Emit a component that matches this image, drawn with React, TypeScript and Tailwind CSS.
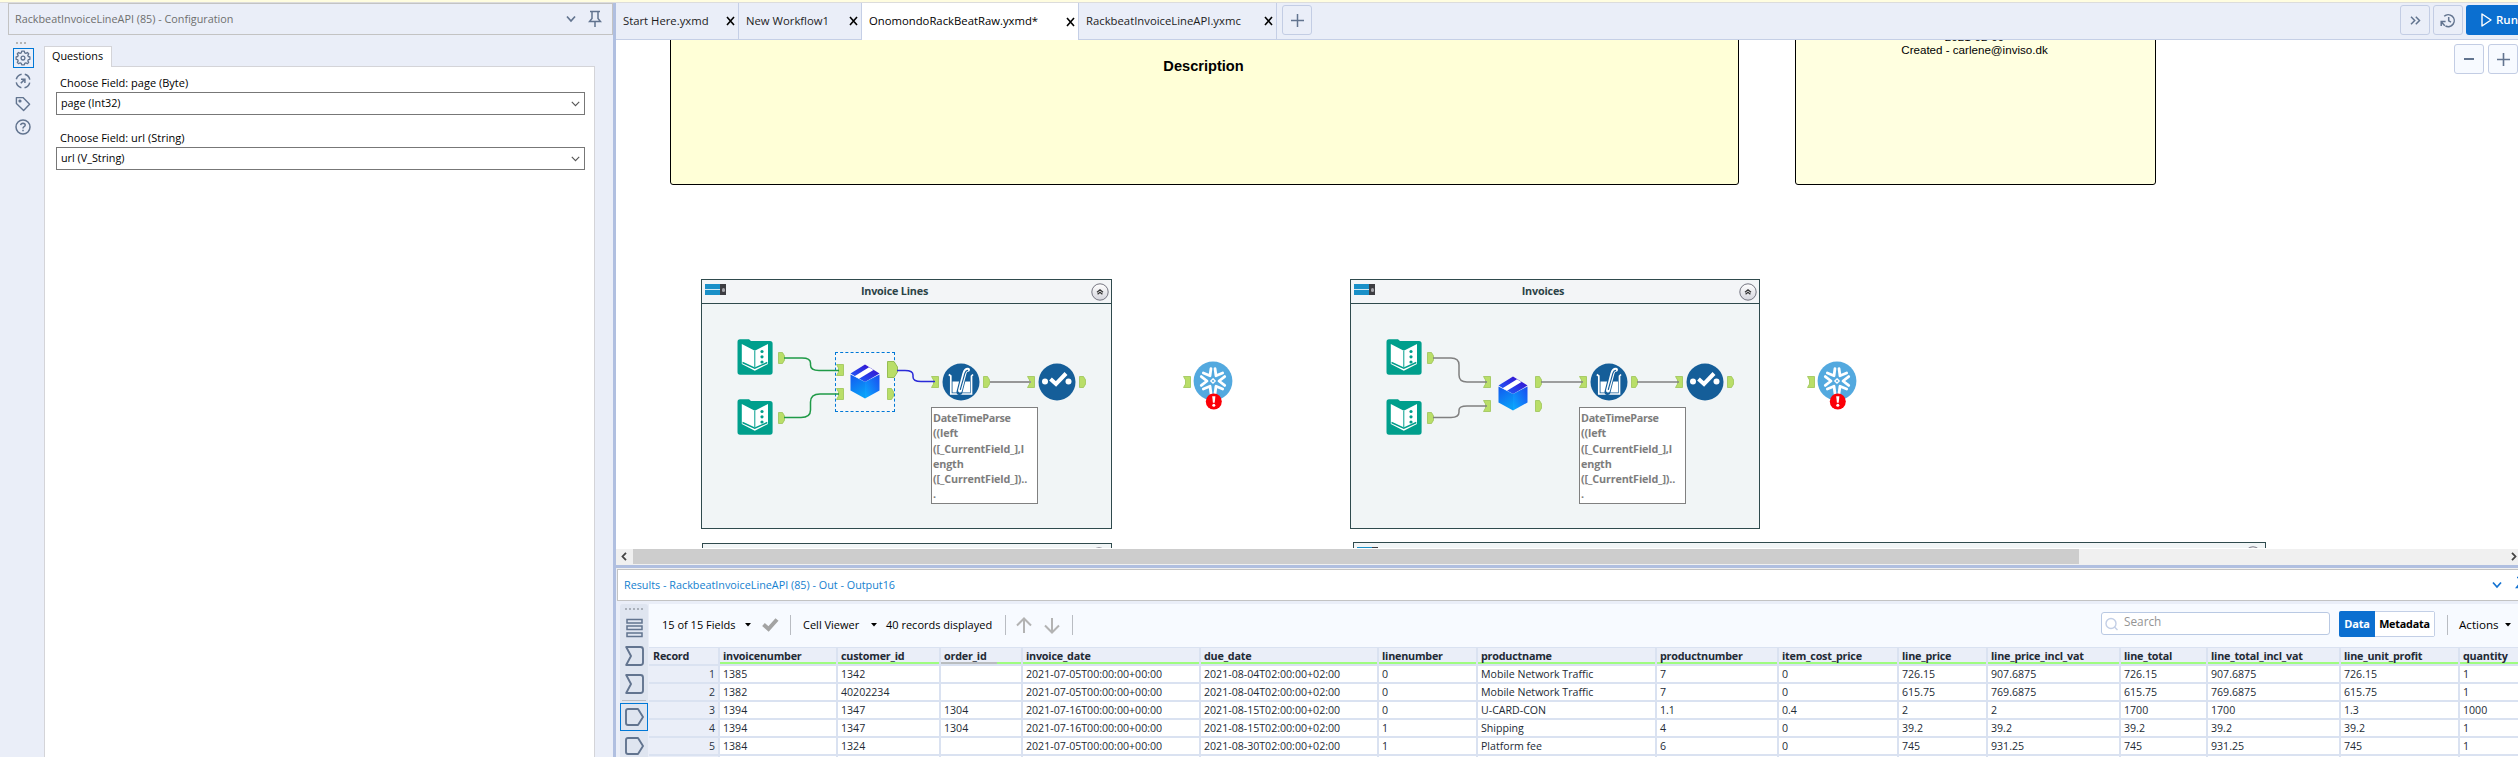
import { ReactNode } from "react";

const SLATE = "#62748f";

/* ---------- small shared icons ---------- */

function Pin({ color }: { color: string }) {
  return (
    <svg width="14" height="18" viewBox="0 0 14 18" fill="none" stroke={color} strokeWidth="1.5">
      <path d="M2 1.5H12M4 1.5V8.5L1.5 11.5H12.5L10 8.5V1.5M7 11.5V17" />
    </svg>
  );
}

function Chevron({ color, w = 10 }: { color: string; w?: number }) {
  return (
    <svg width={w} height="8" viewBox="0 0 10 8" fill="none" stroke={color} strokeWidth="1.7">
      <path d="M1 1.5L5 6L9 1.5" />
    </svg>
  );
}

function Caret() {
  return (
    <svg width="6" height="4" viewBox="0 0 6 4">
      <path d="M0 0H6L3 3.6Z" fill="#000" />
    </svg>
  );
}

function CloseX() {
  return (
    <svg width="9" height="10" viewBox="0 0 9 10" stroke="#000" strokeWidth="1.6">
      <path d="M1 1L8 9M8 1L1 9" />
    </svg>
  );
}

/* ---------- configuration panel ---------- */

function GearIcon() {
  return (
    <svg width="16" height="16" viewBox="0 0 16 16" fill="none" stroke={SLATE} strokeWidth="1.3" strokeLinejoin="round">
      <path d="M6.7 1.2h2.6l.4 1.7 1.2.5 1.5-.9 1.3 1.3-.9 1.5.5 1.2 1.6.4v2.4l-1.6.4-.5 1.2.9 1.5-1.3 1.3-1.5-.9-1.2.5-.4 1.6H6.700l-.4-1.6-1.2-.5-1.5.9-1.3-1.3.9-1.5-.5-1.2-1.6-.4V6.900l1.6-.4.5-1.2-.9-1.5 1.3-1.3 1.5.9 1.2-.5z" />
      <circle cx="8" cy="8.1" r="1.9" />
    </svg>
  );
}

function RunIcon() {
  return (
    <svg width="16" height="16" viewBox="0 0 16 16" fill="none" stroke={SLATE} strokeWidth="1.5">
      <circle cx="8" cy="8" r="6.9" strokeDasharray="7.6 3.24" strokeDashoffset="-1.6" />
      <path d="M5.8 10.2L9.6 6.4M6 6.2H9.9V10" />
    </svg>
  );
}

function TagIcon() {
  return (
    <svg width="16" height="16" viewBox="0 0 16 16" fill="none" stroke={SLATE} strokeWidth="1.4" strokeLinejoin="round">
      <path d="M1.4 1.6H8L14.6 8.2L8.6 14.4L1.4 7.6Z" />
      <circle cx="5" cy="5" r="0.9" fill={SLATE} />
    </svg>
  );
}

function HelpIcon() {
  return (
    <svg width="16" height="16" viewBox="0 0 16 16" fill="none" stroke={SLATE} strokeWidth="1.5">
      <circle cx="8" cy="8" r="7" />
      <path d="M5.7 6.2Q5.9 4.3 8 4.3Q10.3 4.4 10.2 6.2Q10.1 7.2 8.8 7.9Q8 8.4 8 9.6M8 10.8V12.2" />
    </svg>
  );
}

function SelectBox({ value }: { value: string }) {
  return (
    <div className="flex h-[23px] w-[529px] items-center justify-between border border-[#777] bg-white pl-1 pr-1 text-[10.8px] text-black">
      <span className="-mt-px">{value}</span>
      <svg width="9" height="6" viewBox="0 0 9 6" fill="none" stroke="#555" strokeWidth="1.1">
        <path d="M0.8 0.8L4.5 4.6L8.2 0.8" />
      </svg>
    </div>
  );
}

function ConfigPanel() {
  return (
    <div className="flex h-full w-[605px] shrink-0 flex-col">
      <div className="flex h-8 shrink-0 items-center border border-[#c3c3c3] pl-1.5 text-[#6e6e6e]">
        <span className="flex-1 text-[10.8px]">RackbeatInvoiceLineAPI (85) - Configuration</span>
        <Chevron color={SLATE} />
        <div className="ml-3 mr-2.5">
          <Pin color={SLATE} />
        </div>
      </div>
      <div className="flex flex-1">
        <div className="mt-[3px] flex w-9 shrink-0 flex-col items-center pr-[6px] pt-[4px]">
          <div className="flex gap-[2px] pr-1">
            <i className="h-[2px] w-[2px] bg-[#b4b4b4]" />
            <i className="h-[2px] w-[2px] bg-[#b4b4b4]" />
            <i className="h-[2px] w-[2px] bg-[#b4b4b4]" />
          </div>
          <div className="mt-1 flex h-5 w-[21px] items-center justify-center border border-[#0078d7]">
            <GearIcon />
          </div>
          <div className="mt-[5px]"><RunIcon /></div>
          <div className="mt-[7px]"><TagIcon /></div>
          <div className="mt-[7px]"><HelpIcon /></div>
        </div>
        <div className="flex flex-1 flex-col pr-[18px] pt-[11px]">
          <div className="relative z-10 -mb-px flex h-[21px] w-[68px] items-center border border-b-0 border-[#d4d4d8] bg-white pb-px pl-[7px] text-[10.8px]">
            Questions
          </div>
          <div className="flex-1 border border-b-0 border-[#d4d4d8] bg-white pl-[11px] pt-[9px]">
            <div className="mb-[2px] h-[14px] pl-1 text-[11px] leading-[14px]">Choose Field: page (Byte)</div>
            <SelectBox value="page (Int32)" />
            <div className="mb-[2px] mt-4 h-[14px] pl-1 text-[11px] leading-[14px]">Choose Field: url (String)</div>
            <SelectBox value="url (V_String)" />
          </div>
        </div>
      </div>
    </div>
  );
}

/* ---------- workflow tabs ---------- */

function Tab({ label, width, active }: { label: string; width: string; active?: boolean }) {
  return (
    <div
      className={`flex h-full items-center justify-between border-r border-[#c5cfe6] pl-[7px] pr-[3px] text-[11.3px] ${width} ${
        active ? "bg-white text-black" : "border-b text-[#1c1c1c]"
      }`}
    >
      <span>{label}</span>
      <CloseX />
    </div>
  );
}

function TabBar() {
  return (
    <div className="flex h-[37px] shrink-0">
      <Tab label="Start Here.yxmd" width="w-[123px]" />
      <Tab label="New Workflow1" width="w-[123px]" />
      <Tab label="OnomondoRackBeatRaw.yxmd*" width="w-[217px]" active />
      <Tab label="RackbeatInvoiceLineAPI.yxmc" width="w-[198px]" />
      <div className="flex h-full flex-1 justify-between overflow-hidden border-b border-[#c5cfe6] pt-[2px]">
        <div className="ml-[5px] flex h-[30px] w-[30px] items-center justify-center rounded-[3px] border border-[#c3cde4]">
          <svg width="13" height="13" viewBox="0 0 13 13" stroke={SLATE} strokeWidth="1.5">
            <path d="M6.5 0V13M0 6.5H13" />
          </svg>
        </div>
        <div className="flex gap-[3px]">
          <div className="flex h-[30px] w-[30px] items-center justify-center rounded-[3px] border border-[#c3cde4]">
            <svg width="11" height="9" viewBox="0 0 11 9" fill="none" stroke={SLATE} strokeWidth="1.5">
              <path d="M1 0.8L4.7 4.5L1 8.2M5.8 0.8L9.5 4.5L5.8 8.2" />
            </svg>
          </div>
          <div className="flex h-[30px] w-[30px] items-center justify-center rounded-[3px] border border-[#c3cde4]">
            <svg width="16" height="15" viewBox="0 0 16 15" fill="none" stroke={SLATE} strokeWidth="1.5">
              <path d="M4.2 3.2A6 6 0 1 1 5.5 13M1.2 13V8.6H5.6M1.4 9L4.8 12.8M8.7 4V7.8L11 9.2" />
            </svg>
          </div>
          <div className="flex h-[30px] w-[52px] items-center rounded-l-[3px] bg-[#0b6fd0] pl-[15px] text-[11.5px] font-semibold text-white">
            <svg className="shrink-0" width="11" height="14" viewBox="0 0 11 14" fill="none" stroke="#fff" strokeWidth="1.4" strokeLinejoin="round">
              <path d="M1 1V13L10 7Z" />
            </svg>
            <span className="ml-1 shrink-0">Run</span>
          </div>
        </div>
      </div>
    </div>
  );
}

/* ---------- canvas tools ---------- */

function At({ x, y, children }: { x: number; y: number; children: ReactNode }) {
  return (
    <div className="absolute" style={{ left: x, top: y }}>
      {children}
    </div>
  );
}

function TextInputTool() {
  return (
    <svg className="block" width="36" height="36" viewBox="0 0 36 36">
      <path d="M0.5 3Q0.5 0.3 3 0.3H12L14 2H33Q35.6 2 35.6 4.5V33Q35.6 35.7 33 35.7H3Q0.5 35.7 0.5 33Z" fill="#009f8c" />
      <path d="M4.8 5L17.8 11.8L31 5V25L17.8 31.8L4.8 25Z" fill="#fff" />
      <path d="M17.8 12V28" stroke="#009f8c" strokeWidth="1" />
      <path d="M5.5 23.5L17.8 29.2L30.3 23.5" fill="none" stroke="#009f8c" strokeWidth="1.4" />
      <g fill="#009f8c">
        <circle cx="25" cy="12.5" r="1.6" />
        <circle cx="25" cy="17.8" r="1.6" />
        <circle cx="25" cy="23" r="1.6" />
      </g>
    </svg>
  );
}

function MacroTool() {
  return (
    <svg className="block" width="30" height="35" viewBox="0 0 30 35">
      <defs>
        <linearGradient id="cubeTop" x1="0" y1="1" x2="1" y2="0">
          <stop offset="0" stopColor="#1a6bff" />
          <stop offset="1" stopColor="#3c00c8" />
        </linearGradient>
        <linearGradient id="cubeLeft" x1="0" y1="0" x2="0.4" y2="1">
          <stop offset="0" stopColor="#1257f0" />
          <stop offset="1" stopColor="#0a9cf7" />
        </linearGradient>
        <linearGradient id="cubeRight" x1="1" y1="0" x2="0" y2="1">
          <stop offset="0" stopColor="#1b49f0" />
          <stop offset="1" stopColor="#0aaeff" />
        </linearGradient>
      </defs>
      <path d="M0.5 9.5L15 0.5L29.5 9.5L15 18Z" fill="url(#cubeTop)" />
      <path d="M0.5 10.5L15 18V34.5L0.5 26.5Z" fill="url(#cubeLeft)" />
      <path d="M29.5 10.5L15 18V34.5L29.5 26.5Z" fill="url(#cubeRight)" />
      <path d="M4.5 12.3L19 3.2L23.5 6L9 14.8Z" fill="#fff" />
    </svg>
  );
}

function FormulaTool() {
  return (
    <svg className="block" width="38" height="38" viewBox="0 0 38 38">
      <circle cx="19" cy="19" r="18.5" fill="#155e99" />
      <path d="M6.8 11.500L8.800 13V31H29.500V13L31 11.500" fill="none" stroke="#fff" strokeWidth="1.700" />
      <path d="M10.500 18.500H28V29.500H10.500Z" fill="#fff" />
      <path d="M17.500 29L22.200 10.500Q23.500 6 26.500 6.200" fill="none" stroke="#155e99" strokeWidth="6" strokeLinecap="round" />
      <path d="M18 27.500L22.400 10.500Q23.700 6.500 26 6.800" fill="none" stroke="#fff" strokeWidth="4" strokeLinecap="round" />
      <path d="M18.300 26.500L22.800 10.500Q23.600 7.800 25.600 7.400" fill="none" stroke="#155e99" strokeWidth="1.100" strokeLinecap="round" />
    </svg>
  );
}

function SelectTool() {
  return (
    <svg className="block" width="38" height="38" viewBox="0 0 38 38">
      <circle cx="19" cy="19" r="18.5" fill="#155e99" />
      <circle cx="7" cy="18.500" r="3" fill="#fff" />
      <circle cx="30.500" cy="18.500" r="3" fill="#fff" />
      <path d="M12.500 16L18 21L28 10.500" fill="none" stroke="#fff" strokeWidth="4" />
    </svg>
  );
}

function SnowflakeTool() {
  return (
    <svg className="block" width="40" height="49" viewBox="0 0 40 49">
      <circle cx="20" cy="20" r="19.4" fill="#53a9df" />
      <g fill="none" stroke="#fff" strokeWidth="2.800" strokeLinecap="round" strokeLinejoin="round">
        {[30, 90, 150, 210, 270, 330].map((a) => (
          <path key={a} transform={`rotate(${a} 20 20)`} d="M15.600 8.300L20 14L24.400 8.300" />
        ))}
      </g>
      <path d="M20 17.800L22.200 20L20 22.200L17.800 20Z" fill="none" stroke="#fff" strokeWidth="1.300" />
      <circle cx="20.8" cy="40.5" r="8" fill="#fb0007" />
      <path d="M19.200 35.300H22.400L21.700 41.800H19.900Z" fill="#fff" />
      <circle cx="20.8" cy="44.2" r="1.5" fill="#fff" />
    </svg>
  );
}

function InAnchor() {
  return (
    <svg className="block" width="8" height="12" viewBox="0 0 8 12">
      <path d="M0.5 0.5H7.5V11.5H0.5L2.5 8V4Z" fill="#b9de68" stroke="#9cc455" strokeWidth="0.8" />
    </svg>
  );
}

function OutAnchor({ big }: { big?: boolean }) {
  return big ? (
    <svg className="block" width="11" height="17" viewBox="0 0 11 17">
      <path d="M0.5 0.5H7L10.5 6V11L7 16.5H0.5Z" fill="#b9de68" stroke="#8fb84a" strokeWidth="0.9" />
    </svg>
  ) : (
    <svg className="block" width="7" height="12" viewBox="0 0 7 12">
      <path d="M0.5 0.5H4.5L6.6 4V8L4.5 11.5H0.5Z" fill="#b9de68" stroke="#9cc455" strokeWidth="0.8" />
    </svg>
  );
}

function StickyNote() {
  return (
    <div className="h-[97px] w-[107px] whitespace-nowrap border border-[#808080] bg-white pl-[1px] pt-[2px] text-[10.8px] font-bold leading-[15.3px] tracking-[-0.15px] text-[#7d7d7d]">
      <div className="tracking-[-0.35px]">DateTimeParse</div>
      <div>((left</div>
      <div>([_CurrentField_],l</div>
      <div>ength</div>
      <div>([_CurrentField_])..</div>
      <div>.</div>
    </div>
  );
}

function CollapseButton() {
  return (
    <svg width="18" height="18" viewBox="0 0 18 18">
      <defs>
        <linearGradient id="btn" x1="0" y1="0" x2="0" y2="1">
          <stop offset="0" stopColor="#fff" />
          <stop offset="1" stopColor="#d5d5dd" />
        </linearGradient>
      </defs>
      <circle cx="9" cy="9" r="8.2" fill="url(#btn)" stroke="#747480" />
      <path d="M6 9.3L9 6.8L12 9.3M6.6 11.300L9 9.300L11.400 11.300" fill="none" stroke="#333" strokeWidth="1.2" />
    </svg>
  );
}

function Toggle() {
  return (
    <div className="flex h-[11px] w-[21px]">
      <div className="flex flex-1 items-center bg-[#1a90c8]">
        <div className="h-px w-full bg-white/80" />
      </div>
      <div className="flex w-[6px] items-center justify-center bg-[#3d3d42]">
        <div className="h-1 w-[3px] rounded-full bg-[#a5a5ab]" />
      </div>
    </div>
  );
}

function ToolContainer({ title, width }: { title: string; width: string }) {
  return (
    <div className={`flex h-[250px] flex-col border border-[#2f4a4d] bg-[#f1f5f6] ${width}`}>
      <div className="flex h-6 shrink-0 items-center border-b border-[#2f4a4d] bg-[#f3f5f7] pl-[3px] pr-[2px]">
        <div className="-mt-1"><Toggle /></div>
        <span className="flex-1 pr-[28px] text-center text-[10.8px] font-bold tracking-[-0.2px] text-[#2b4346]">{title}</span>
        <CollapseButton />
      </div>
    </div>
  );
}

function Peek({ width, toggle }: { width: string; toggle?: boolean }) {
  return (
    <div className={`flex h-6 items-start justify-between overflow-hidden border border-[#2f4a4d] bg-[#f1f5f6] pl-[3px] pr-[3px] pt-1 ${width}`}>
      {toggle ? <Toggle /> : <span />}
      <div className="-mt-px"><CollapseButton /></div>
    </div>
  );
}

/* Canvas coordinates are relative to the canvas' top-left corner. */
function Canvas() {
  return (
    <div className="relative h-[508px] shrink-0 overflow-hidden bg-white">
      <At x={54} y={-20}>
        <div className="flex h-[165px] w-[1069px] justify-center rounded-[3px] border border-black bg-[#ffffd7] pt-[35px]">
          <span className="-ml-[2px] font-['Liberation_Sans',sans-serif] text-[14.6px] font-bold leading-5">Description</span>
        </div>
      </At>
      <At x={1179} y={-20}>
        <div className="h-[165px] w-[361px] rounded-[3px] border border-black bg-[#ffffe0] pr-[2px] pt-[9px] text-center font-['Liberation_Sans',sans-serif] text-[11.6px] leading-[13px]">
          <div>2021-02-09</div>
          <div>Created - carlene@inviso.dk</div>
        </div>
      </At>

      <At x={1838} y={4}>
        <div className="flex gap-1">
          <div className="flex h-[30px] w-[30px] items-center justify-center rounded-[3px] border border-[#c3cde4] bg-[#f7faff]">
            <div className="h-[2px] w-[10px] bg-[#62748f]" />
          </div>
          <div className="flex h-[30px] w-[30px] items-center justify-center rounded-[3px] border border-[#c3cde4] bg-[#f7faff]">
            <svg width="13" height="13" viewBox="0 0 13 13" stroke={SLATE} strokeWidth="1.6">
              <path d="M6.5 0V13M0 6.5H13" />
            </svg>
          </div>
        </div>
      </At>

      <At x={85} y={239}><ToolContainer title="Invoice Lines" width="w-[411px]" /></At>
      <At x={734} y={239}><ToolContainer title="Invoices" width="w-[410px]" /></At>
      <At x={86} y={503}><Peek width="w-[410px]" /></At>
      <At x={737} y={502}><Peek width="w-[913px]" toggle /></At>

      {/* selection frame of the macro tool */}
      <At x={219} y={312}>
        <div className="h-[60px] w-[60px] border border-dashed border-[#0078d7] bg-[#f5f7f8]" />
      </At>

      <At x={121} y={299}><TextInputTool /></At>
      <At x={121} y={359}><TextInputTool /></At>
      <At x={162} y={312}><OutAnchor /></At>
      <At x={162} y={372}><OutAnchor /></At>
      <At x={220} y={324}><InAnchor /></At>
      <At x={220} y={348}><InAnchor /></At>
      <At x={233.5} y={324}><MacroTool /></At>
      <At x={271} y={321}><OutAnchor big /></At>
      <At x={271} y={348}><OutAnchor /></At>
      <At x={315} y={336}><InAnchor /></At>
      <At x={325.5} y={322.5}><FormulaTool /></At>
      <At x={367} y={336}><OutAnchor /></At>
      <At x={411} y={336}><InAnchor /></At>
      <At x={421.5} y={322.5}><SelectTool /></At>
      <At x={463} y={336}><OutAnchor /></At>
      <At x={315} y={367}><StickyNote /></At>
      <At x={567} y={336}><InAnchor /></At>
      <At x={576.5} y={321}><SnowflakeTool /></At>

      <At x={770} y={299}><TextInputTool /></At>
      <At x={770} y={359}><TextInputTool /></At>
      <At x={810.5} y={312}><OutAnchor /></At>
      <At x={810.5} y={372}><OutAnchor /></At>
      <At x={867} y={336}><InAnchor /></At>
      <At x={867} y={360}><InAnchor /></At>
      <At x={881.5} y={336}><MacroTool /></At>
      <At x={919} y={336}><OutAnchor /></At>
      <At x={919} y={360}><OutAnchor /></At>
      <At x={963} y={336}><InAnchor /></At>
      <At x={973.5} y={322.5}><FormulaTool /></At>
      <At x={1015} y={336}><OutAnchor /></At>
      <At x={1059} y={336}><InAnchor /></At>
      <At x={1069.5} y={322.5}><SelectTool /></At>
      <At x={1111} y={336}><OutAnchor /></At>
      <At x={963} y={367}><StickyNote /></At>
      <At x={1191} y={336}><InAnchor /></At>
      <At x={1200.5} y={321}><SnowflakeTool /></At>

      <svg className="absolute left-0 top-0" width="1902" height="509" fill="none" strokeWidth="1.5">
        <g stroke="#1f9a47">
          <path d="M168 318H186Q194.5 318 194.5 323V325Q194.5 330.5 203 330.5H223" />
          <path d="M168 377.5H185Q194.5 377.5 194.5 370V362Q194.5 354 204 354H223" />
        </g>
        <path d="M281 330.5H289Q297 330.5 297 335V337Q297 341.5 305 341.5H319" stroke="#2a2ad8" />
        <g stroke="#808080">
          <path d="M374 342H415" stroke="#979797" strokeWidth="1.8" />
          <path d="M817 318H835Q843 318 843 325V335Q843 342 851 342H871" />
          <path d="M817 377.5H835Q843 377.5 843 372V370Q843 366 851 366H871" />
          <path d="M925 342H967" strokeWidth="1.7" />
          <path d="M1021 342H1063" strokeWidth="1.7" />
        </g>
      </svg>
    </div>
  );
}

function HScrollbar() {
  return (
    <div className="flex h-[17px] shrink-0 border-t border-white bg-[#f0f0f0] pb-px">
      <div className="flex w-[17px] items-center pl-[5px]">
        <svg width="6" height="9" viewBox="0 0 6 9" fill="none" stroke="#444" strokeWidth="1.8">
          <path d="M5 0.8L1.5 4.5L5 8.2" />
        </svg>
      </div>
      <div className="w-[1446px] bg-[#cdcdcd]" />
      <div className="flex flex-1 items-center justify-end pr-px">
        <svg width="6" height="9" viewBox="0 0 6 9" fill="none" stroke="#444" strokeWidth="1.8">
          <path d="M1 0.8L4.5 4.5L1 8.2" />
        </svg>
      </div>
    </div>
  );
}

/* ---------- results ---------- */

const COLUMNS = [
  "invoicenumber", "customer_id", "order_id", "invoice_date", "due_date", "linenumber", "productname", "productnumber",
  "item_cost_price", "line_price", "line_price_incl_vat", "line_total", "line_total_incl_vat", "line_unit_profit", "quantity",
];

const ROWS = [
  ["1385", "1342", "", "2021-07-05T00:00:00+00:00", "2021-08-04T02:00:00+02:00", "0", "Mobile Network Traffic", "7", "0", "726.15", "907.6875", "726.15", "907.6875", "726.15", "1"],
  ["1382", "40202234", "", "2021-07-05T00:00:00+00:00", "2021-08-04T02:00:00+02:00", "0", "Mobile Network Traffic", "7", "0", "615.75", "769.6875", "615.75", "769.6875", "615.75", "1"],
  ["1394", "1347", "1304", "2021-07-16T00:00:00+00:00", "2021-08-15T02:00:00+02:00", "0", "U-CARD-CON", "1.1", "0.4", "2", "2", "1700", "1700", "1.3", "1000"],
  ["1394", "1347", "1304", "2021-07-16T00:00:00+00:00", "2021-08-15T02:00:00+02:00", "1", "Shipping", "4", "0", "39.2", "39.2", "39.2", "39.2", "39.2", "1"],
  ["1384", "1324", "", "2021-07-05T00:00:00+00:00", "2021-08-30T02:00:00+02:00", "1", "Platform fee", "6", "0", "745", "931.25", "745", "931.25", "745", "1"],
  ["", "", "", "", "", "", "", "", "", "", "", "", "", "", ""],
];

const GRID =
  "grid gap-x-[2px] grid-cols-[69px_116px_101px_80px_176px_176px_97px_177px_120px_118px_87px_131px_85px_131px_117px_80px]";

function ResultsTable() {
  return (
    <div className="flex-1 overflow-hidden bg-[#dae2f1] pt-px">
      <div className={`${GRID} text-[10.8px] font-bold tracking-[-0.22px] text-[#222a35]`}>
        <div className="h-4 bg-[#eaeef8] pl-1 leading-[15px]">Record</div>
        {COLUMNS.map((c) => (
          <div key={c} className="flex h-4 flex-col bg-[#eaeef8]">
            <span className="relative z-10 h-[14px] pl-[3px] leading-[15px]">{c}</span>
            <div className="h-[2px] bg-[#9ffc80]">
              {c === "order_id" && <div className="h-full w-[56px] bg-[#b9bdbf]" />}
            </div>
          </div>
        ))}
      </div>
      {ROWS.map((r, i) => (
        <div key={i} className={`mt-[2px] ${GRID}`}>
          <div className="h-4 bg-[#eaeef8] pr-[3px] text-right text-[10.5px] leading-[16px] text-[#2b3442]">
            {r[0] && i + 1}
          </div>
          {r.map((v, j) => (
            <div key={j} className="h-4 whitespace-nowrap bg-white pl-[3px] text-[10.6px] leading-[17px] text-[#222a35]">
              {v}
            </div>
          ))}
        </div>
      ))}
    </div>
  );
}

function InShape() {
  return (
    <svg className="block" width="19" height="20" viewBox="0 0 19 20" fill="none" stroke={SLATE} strokeWidth="1.9" strokeLinejoin="round">
      <path d="M1.2 1H15.5Q18 1 18 3.5V16.5Q18 19 15.500 19H1.2L6 10Z" />
    </svg>
  );
}

function OutShape() {
  return (
    <svg className="block" width="19" height="18" viewBox="0 0 19 18" fill="none" stroke={SLATE} strokeWidth="1.9" strokeLinejoin="round">
      <path d="M3 1H13L18 9L13 17H3Q1 17 1 15V3Q1 1 3 1Z" />
    </svg>
  );
}

function Separator() {
  return <div className="h-5 w-px bg-[#b9bcc2]" />;
}

function ResultsToolbar() {
  return (
    <div className="flex h-[43px] shrink-0 items-center overflow-hidden bg-[#f7faff] pb-px pl-[13px] text-[11px] text-black">
      <span className="w-[83px]">15 of 15 Fields</span>
      <Caret />
      <svg className="ml-[11px] mr-[11px]" width="17" height="14" viewBox="0 0 17 14" fill="none" stroke="#a3a3a3" strokeWidth="4">
        <path d="M1.500 6.500L6.500 11L15 1.500" />
      </svg>
      <Separator />
      <span className="ml-3 w-[68px]">Cell Viewer</span>
      <Caret />
      <span className="ml-[9px] w-[119px]">40 records displayed</span>
      <Separator />
      <svg className="ml-2.5" width="16" height="17" viewBox="0 0 16 17" fill="none" stroke="#b3b3b3" strokeWidth="2">
        <path d="M8 16V2M1 8.500L8 1.500L15 8.500" />
      </svg>
      <svg className="ml-3 mr-3" width="16" height="17" viewBox="0 0 16 17" fill="none" stroke="#b3b3b3" strokeWidth="2">
        <path d="M8 1V15M1 8.500L8 15.500L15 8.500" />
      </svg>
      <Separator />
      <div className="-mt-[3px] ml-auto mr-[9px] flex h-[23px] w-[229px] items-center rounded-[3px] border border-[#b9c9e3] bg-white pl-[3px]">
        <svg width="13" height="14" viewBox="0 0 13 14" fill="none" stroke="#c3cfe6" strokeWidth="1.400">
          <circle cx="6" cy="6.500" r="5" />
          <path d="M9.500 10L12.500 13" />
        </svg>
        <span className="-mt-[3px] ml-[6px] text-[11.8px] text-[#949494]">Search</span>
      </div>
      <div className="-mt-[2px] flex h-[26px] rounded-[2px] border border-[#c3cfe6] font-bold tracking-[-0.2px]">
        <div className="-my-px -ml-px flex w-9 items-center justify-center rounded-l-[2px] bg-[#0b6fd0] text-white">Data</div>
        <div className="flex w-[59px] items-center justify-center bg-white text-[10.8px]">Metadata</div>
      </div>
      <div className="ml-3"><Separator /></div>
      <span className="ml-[11px] w-[46px] text-[11.6px]">Actions</span>
      <div className="mr-[7px]"><Caret /></div>
    </div>
  );
}

function Results() {
  return (
    <div className="ml-px flex flex-1 flex-col overflow-hidden">
      <div className="-mr-px flex h-8 shrink-0 items-center justify-between overflow-hidden border border-[#c3c3c3] bg-white pl-1.5 text-[#1581cf]">
        <span className="text-[10.8px]">Results - RackbeatInvoiceLineAPI (85) - Out - Output16</span>
        <div className="-mr-[11px] flex items-center gap-[13px]">
          <Chevron color="#1272d2" />
          <Pin color="#1272d2" />
        </div>
      </div>
      <div className="flex flex-1 overflow-hidden pt-[3px]">
        <div className="ml-[3px] flex w-7 shrink-0 flex-col items-center rounded-t-[3px] bg-[#dfe5f0] pt-1">
          <div className="flex gap-[2px]">
            {[0, 1, 2, 3, 4].map((i) => (
              <i key={i} className="h-[2px] w-[2px] bg-[#aab0ba]" />
            ))}
          </div>
          <svg className="mt-2 shrink-0" width="17" height="20" viewBox="0 0 17 20" fill="none" stroke={SLATE} strokeWidth="1.500">
            <path d="M1 1.500H16V5H1ZM1 8H16V11.500H1ZM1 15H16V18.500H1Z" />
          </svg>
          <div className="mt-2 shrink-0"><InShape /></div>
          <div className="mt-2 shrink-0"><InShape /></div>
          <div className="mt-[6px] h-px w-6 shrink-0 bg-[#b9bcc2]" />
          <div className="mt-[2px] flex h-7 w-7 shrink-0 items-center justify-center border border-[#0078d7]">
            <OutShape />
          </div>
          <div className="mt-[6px] shrink-0"><OutShape /></div>
        </div>
        <div className="ml-px flex flex-1 flex-col overflow-hidden">
          <ResultsToolbar />
          <ResultsTable />
        </div>
      </div>
    </div>
  );
}

export default function App() {
  return (
    <div className="flex h-[757px] w-[2518px] flex-col overflow-hidden bg-[#eaeef8] font-['Open_Sans',sans-serif] text-black">
      <div className="h-[3px] shrink-0 border-b border-[#dcdcdc] bg-[#fffde0]" />
      <div className="flex flex-1 overflow-hidden pl-2">
        <ConfigPanel />
        <div className="w-[3px] shrink-0 bg-[#b0bfe0]" />
        <div className="flex flex-1 flex-col overflow-hidden">
          <TabBar />
          <Canvas />
          <HScrollbar />
          <div className="h-[3px] shrink-0 bg-[#b0bfe0]" />
          <div className="h-px shrink-0 bg-[#f0f0f0]" />
          <Results />
        </div>
      </div>
    </div>
  );
}
